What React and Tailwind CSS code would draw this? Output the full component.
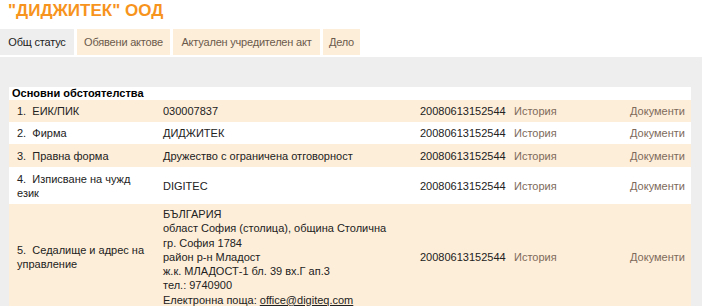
const rows = [
  { n: "1.", label: "ЕИК/ПИК", value: ["030007837"], h: "h-[22px]" },
  { n: "2.", label: "Фирма", value: ["ДИДЖИТЕК"], h: "h-[22px]" },
  { n: "3.", label: "Правна форма", value: ["Дружество с ограничена отговорност"], h: "h-[23px]" },
  { n: "4.", label: "Изписване на чужд език", value: ["DIGITEC"], h: "h-[37px]" },
  {
    n: "5.",
    label: "Седалище и адрес на управление",
    value: [
      "БЪЛГАРИЯ",
      "област София (столица), община Столична",
      "гр. София 1784",
      "район р-н Младост",
      "ж.к. МЛАДОСТ-1 бл. 39 вх.Г ап.3",
      "тел.: 9740900",
    ],
    email: "office@digiteq.com",
    h: "",
  },
];

const tabs = [
  { label: "Общ статус", w: "w-[74px]" },
  { label: "Обявени актове", w: "w-[93px]" },
  { label: "Актуален учредителен акт", w: "w-[147px]" },
  { label: "Дело", w: "w-[37px]" },
];

export default function App() {
  return (
    <div className="h-[306px] w-[702px] overflow-hidden bg-white text-[11px] leading-[14px] text-[#222]" style={{ fontFamily: '"Liberation Sans", Arial, sans-serif' }}>
      <h1 className="pl-[8px] pt-[1px] text-[17px] font-bold leading-[20px] text-[#f7941d]">"ДИДЖИТЕК" ООД</h1>

      <div className="mt-[8px] flex gap-[3px]">
        {tabs.map((tab, i) => (
          <div
            key={tab.label}
            className={`flex h-[26px] items-center justify-center whitespace-nowrap text-[11px] tracking-[-0.2px] ${tab.w} ${
              i === 0 ? "bg-[#eeeeee] text-[#222]" : "bg-[#fdeed9] text-[#6b5a4c]"
            }`}
          >
            {tab.label}
          </div>
        ))}
      </div>

      <div className="mt-[2px] h-[300px] bg-[#eeeeee] pl-[9px] pr-[11px] pt-[30px]">
        <table className="w-full table-fixed border-collapse bg-white">
          <colgroup>
            <col className="w-[154px]" />
            <col className="w-[249px]" />
            <col className="w-[93px]" />
            <col className="w-[94px]" />
            <col />
          </colgroup>
          <tbody>
            <tr>
              <td colSpan={5} className="h-[13px] pl-[3px] align-middle text-[11px] font-bold leading-[13px] text-black">
                Основни обстоятелства
              </td>
            </tr>
            {rows.map((row, i) => (
              <tr key={row.n} className={`${row.h} ${i % 2 === 0 ? "bg-[#fdeed9]" : "bg-white"}`}>
                <td className="py-[4px] pl-[8px] pr-[14px] align-middle">
                  {row.n}&nbsp;&nbsp;{row.label}
                </td>
                <td className={`align-middle ${row.email ? "pb-[2px] pt-[3px] leading-[14.3px]" : ""}`}>
                  {row.value.map((line) => (
                    <div key={line}>{line}</div>
                  ))}
                  {row.email && (
                    <div>
                      Електронна поща: <span className="underline">{row.email}</span>
                    </div>
                  )}
                </td>
                <td className="pl-[8px] align-middle">20080613152544</td>
                <td className="pl-[9px] align-middle text-[#7d6a5b]">История</td>
                <td className="pr-[6px] text-right align-middle text-[#7d6a5b]">Документи</td>
              </tr>
            ))}
          </tbody>
        </table>
      </div>
    </div>
  );
}
